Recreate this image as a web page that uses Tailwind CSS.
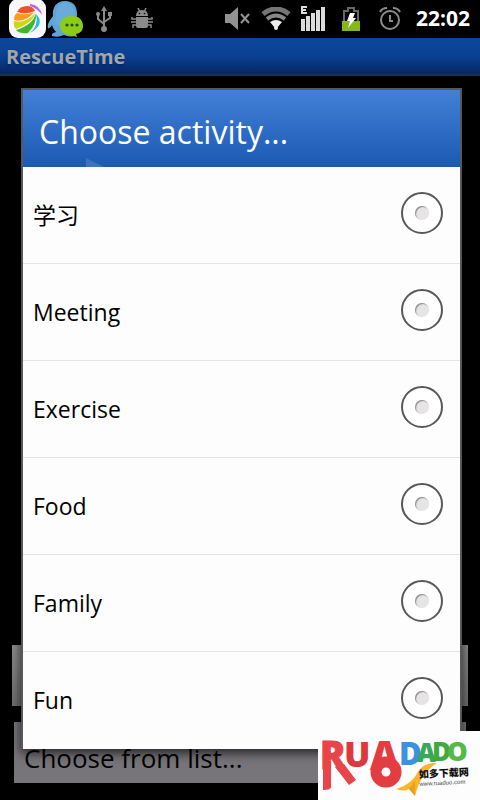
<!DOCTYPE html>
<html lang="en">
<head>
    <meta charset="UTF-8">
    <meta name="viewport" content="width=device-width, initial-scale=1.0">
    <title>RescueTime</title>
    <script src="https://cdn.jsdelivr.net/npm/@tailwindcss/browser@4"></script>
</head>
<body class="bg-black font-['Open_Sans','Noto_Sans_CJK_SC',sans-serif]">
    <div class="relative flex flex-col min-h-screen overflow-hidden">
        <!-- Status bar -->
        <div class="flex items-center justify-between h-[38px] pl-2 pr-[10px]">
            <div class="flex items-center">
                <svg class="w-[39px] h-[38px]" viewBox="0 0 39 38">
                    <rect x="1" y="-1" width="37" height="39" rx="9" fill="#f8f8f8"/>
                    <path d="M9 12Q12 6 19 6Q25 6 27 11Q18 15 9 12Z" fill="#f2502c"/>
                    <path d="M6 20Q6 15 9 13Q18 16 26 12Q18 23 6 20Z" fill="#fb9a20"/>
                    <path d="M8 29Q5 26 6 21Q18 24 27 13Q26 22 8 29Z" fill="#cfd51b"/>
                    <path d="M20 33Q12 34 8 30Q25 25 28 13Q29 24 20 33Z" fill="#3fb62c"/>
                    <path d="M22 33Q31 26 28 14Q38 24 22 33Z" fill="#25b8e8"/>
                    <path d="M22 4Q32 5 34 15Q29 8 22 6Z" fill="#c85be5"/>
                </svg>
                <svg class="w-[38px] h-[38px]" viewBox="0 0 38 38">
                    <path d="M18 1C9 1 5 8 6 16C3 20 0 24 1 28Q3 29 5 25Q6 29 9 32Q4 33 5 36Q11 38 17 35Q25 38 29 35L30 14C30 6 26 1 18 1Z" fill="#5ea5d8"/>
                    <path d="M18 3C12 3 9 8 9 14L8 24Q18 32 28 14C27 6 23 3 18 3Z" fill="#69abdb"/>
                    <path d="M25 16C17 16 13 20 13 26C13 31 17 35 23 35L30 37L29 34C34 33 36 30 36 26C36 20 32 16 25 16Z" fill="#8dcc16"/>
                    <g fill="#27500b"><circle cx="20" cy="25" r="1.6"/><circle cx="25" cy="25" r="1.6"/><circle cx="30" cy="25" r="1.6"/></g>
                </svg>
                <svg class="w-[18px] h-[26px] ml-[10px]" viewBox="0 0 18 26" fill="none" stroke="#8b8b8b" stroke-width="2">
                    <path d="M9 4V22M3 9V13L9 18M15 9V12L9 16"/>
                    <path d="M9 0L12 5H6Z" fill="#8b8b8b" stroke="none"/>
                    <circle cx="9" cy="23" r="3" fill="#8b8b8b" stroke="none"/>
                    <circle cx="3" cy="8" r="2" fill="#8b8b8b" stroke="none"/>
                    <path d="M13 6H17V10H13Z" fill="#8b8b8b" stroke="none"/>
                </svg>
                <svg class="w-[22px] h-[22px] ml-[18px]" viewBox="0 0 22 22">
                    <g fill="#8b8b8b">
                        <path d="M5 8Q5 2 11 2Q17 2 17 8Z"/>
                        <path d="M5 9H17V18Q17 20 15 20H7Q5 20 5 18Z"/>
                    </g>
                    <path d="M7 0L9 4M15 0L13 4M5 11H1V9M5 14H0M5 17H2V20M17 11H21V9M17 14H22M17 17H20V20" stroke="#8b8b8b" stroke-width="1.5" fill="none"/>
                    <circle cx="8.5" cy="5.5" r="0.8"/><circle cx="13.5" cy="5.5" r="0.8"/>
                </svg>
            </div>
            <div class="flex items-center">
                <svg class="w-[26px] h-[24px]" viewBox="0 0 26 24">
                    <path d="M0 7H5L13 0V23L5 16H0Z" fill="#929292"/>
                    <path d="M16 7L24 16M24 7L16 16" stroke="#929292" stroke-width="2"/>
                </svg>
                <svg class="w-[30px] h-[24px] ml-[10px]" viewBox="0 0 30 24" fill="none">
                    <path d="M2 7Q15 -3 28 7" stroke="#757575" stroke-width="5"/>
                    <path d="M6 12Q15 5 24 12" stroke="#888" stroke-width="4"/>
                    <path d="M9 15Q15 11 21 15L16 21H14Z" fill="#eee"/>
                    <circle cx="15" cy="21" r="2" fill="#eee"/>
                </svg>
                <svg class="w-[27px] h-[26px] ml-[9px]" viewBox="0 0 27 26" fill="#dcdcdc">
                    <path d="M1 0H7V2H3V3H6V5H3V6H7V8H1Z"/>
                    <path d="M1 13H5V25H1ZM6 10H10V25H6ZM11 7H15V25H11ZM16 4H20V25H16ZM21 1H25V25H21Z"/>
                </svg>
                <svg class="w-[18px] h-[24px] ml-[15px]" viewBox="0 0 18 24">
                    <path d="M2 14V4H6V1H12V4H16V14" fill="none" stroke="#666" stroke-width="2"/>
                    <path d="M0 14H18V24H0Z" fill="#86b81b"/>
                    <path d="M8 6H13L11 11H14L6 21L8 14H5Z" fill="#fff"/>
                </svg>
                <svg class="w-[22px] h-[24px] ml-[19px]" viewBox="0 0 22 24" fill="none" stroke="#8c8c8c" stroke-width="2">
                    <circle cx="11" cy="13" r="9"/>
                    <path d="M11 8V14H14M1 5Q3 1 8 1M21 5Q19 1 14 1"/>
                </svg>
                <span class="ml-[15px] text-[21px] font-bold text-white">22:02</span>
            </div>
        </div>

        <h1 class="h-[38px] pl-[6px] text-xl leading-[37px] font-bold text-[#a2a5ab] bg-linear-to-b from-[#0c4799] via-[#0b4193] to-[#052765] border-b-2 border-[#17305c] text-shadow-md">RescueTime</h1>

        <!-- Page behind the dialog -->
        <div class="flex flex-col gap-4 mt-auto px-3 pb-[17px]">
            <input type="text" aria-label="Activity" class="h-[61px] bg-linear-to-b from-[#8a8a8a] to-[#6d6d6d]">
            <button type="button" class="h-[61px] mx-[2px] pl-[10px] pt-3 text-left text-[26px] text-black bg-[#77747a]">Choose from list...</button>
        </div>

        <!-- Dialog -->
        <div role="dialog" aria-labelledby="dialogTitle" class="absolute top-[88px] left-[21px] right-[18px] border-2 border-b-0 border-[#57585a] bg-[#fdfdfd] shadow-[0_4px_10px_rgba(0,0,0,0.7)]">
            <div class="relative h-[77px] overflow-hidden bg-linear-to-b from-[#4381d9] to-[#1b59b3]">
                <svg class="absolute bottom-0 left-[63px] w-[18px] h-[9px]" viewBox="0 0 18 9"><path d="M0 0L18 9H0Z" fill="#3a73c6"/></svg>
                <h2 id="dialogTitle" class="relative pl-4 text-[32px] leading-[84px] text-white">Choose activity...</h2>
            </div>
            <form id="activityForm"></form>
        </div>

        <!-- Site badge -->
        <svg class="absolute bottom-0 right-0 w-[162px] h-[69px] bg-[#fdfdfd]" viewBox="0 0 162 69" font-family="Open Sans, sans-serif" font-weight="800">
            <path d="M78 58Q94 54 101 39Q108 31 119 32Q103 41 97 65L91 58Q86 61 78 58Z" fill="#f9b52b"/>
            <path d="M91 58L97 50V65Z" fill="#e8a11f"/>
            <path d="M5 30H13V56Q13 59 5 59Z" fill="#e9444a"/>
            <path d="M17 36L26 33L38 49L31 54Z" fill="#e9444a"/>
            <text x="2" y="38" font-size="38" fill="#e9444a" stroke="#e9444a">R</text>
            <text x="26" y="36" font-size="35" fill="#dd383d">U</text>
            <text x="52" y="39" font-size="40" fill="#e33d41">A</text>
            <ellipse cx="68" cy="41" rx="10" ry="10" fill="none" stroke="#e33d41" stroke-width="11"/>
            <text x="81" y="34" font-size="31" fill="#3d91df">D</text>
            <text x="99" y="31" font-size="26" fill="#3aa85a">A</text>
            <text x="114" y="30" font-size="26" fill="#40a93f">D</text>
            <text x="129" y="30" font-size="26" fill="#55b947">O</text>
            <g transform="rotate(-3 102 46)">
                <text x="101" y="47" font-size="10" font-family="Noto Sans CJK SC, sans-serif" font-weight="900" fill="#111">如多下载网</text>
                <text x="101" y="55" font-size="6" font-family="Liberation Sans, sans-serif" font-weight="400" fill="#444">www.ruaduo.com</text>
            </g>
        </svg>
    </div>

    <script>
        const activities = ["学习", "Meeting", "Exercise", "Food", "Family", "Fun"];
        const form = document.getElementById("activityForm");

        activities.forEach((name, i) => {
            const row = document.createElement("label");
            row.className = "flex items-center justify-between h-[97px] pl-[10px] pr-[17px] pb-1 border-b border-[#e4e4e4] last:border-[#fdfdfd] text-[23px] text-black";
            row.innerHTML = `
                <span class="pt-1">${name}</span>
                <input type="radio" name="activity" value="${i}" class="appearance-none grid place-items-center size-[42px] rounded-full border-2 border-[#58585a] bg-white before:size-[14px] before:rounded-full before:bg-[#e6e4e5] before:shadow-[inset_1px_1px_1px_#8a8a8a] checked:before:bg-[#7ab800]">
            `;
            form.appendChild(row);
        });
    </script>
</body>
</html>
